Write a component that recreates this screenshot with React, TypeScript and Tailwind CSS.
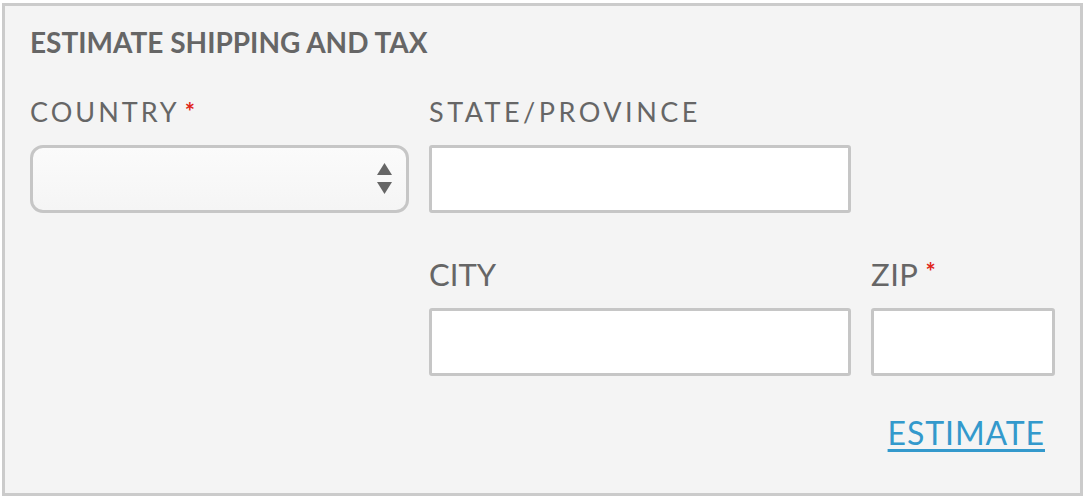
export default function App() {
  const base = "text-[#666] font-['Lato',sans-serif]";
  const star = "inline-block align-top leading-none text-[#e0261b] text-[24px] font-bold tracking-normal relative top-[2px]";
  const input = "h-[68px] bg-white border-[3px] border-[#c6c6c6] rounded-[3px]";
  return (
    <div className="w-[1084px] h-[500px] bg-white pt-[3px] pl-[2px]">
      <div className="w-[1081px] h-[493px] border-[3px] border-[#cbcbcb] bg-[#f4f4f4] px-[25px] pt-[22px]">
        <h2 className={`text-[28px] leading-[28px] font-bold ${base}`}>
          ESTIMATE SHIPPING AND TAX
        </h2>

        <div className="grid grid-cols-[379px_422px_184px] gap-x-[20px] mt-[42px]">
          <div className={`text-[27px] leading-[28px] tracking-[3px] ${base}`}>
            COUNTRY<span className={`${star} ml-[5px]`}>*</span>
          </div>
          <div className={`text-[27px] leading-[28px] tracking-[3.5px] ${base}`}>
            STATE/PROVINCE
          </div>
          <div />

          <div className="relative mt-[19px] h-[68px] rounded-[13px] border-[3px] border-[#c6c6c6] bg-gradient-to-b from-[#fbfbfb] to-[#f5f5f5]">
            <svg
              className="absolute right-[14px] top-[15px]"
              width="15"
              height="31"
              viewBox="0 0 15 31"
            >
              <polygon points="7.5,0 15,12 0,12" fill="#666" />
              <polygon points="0,19 15,19 7.5,31" fill="#666" />
            </svg>
          </div>
          <div className={`${input} mt-[19px]`} />
          <div />

          <div />
          <div className={`text-[31px] leading-[32px] mt-[45px] ${base}`}>CITY</div>
          <div className={`text-[31px] leading-[32px] tracking-[0.5px] mt-[45px] ${base}`}>
            ZIP<span className={`${star} ml-[7px]`}>*</span>
          </div>

          <div />
          <div className={`${input} mt-[18px]`} />
          <div className={`${input} mt-[18px]`} />
        </div>

        <div className="flex justify-end pr-[10px] mt-[41px]">
          <a
            href="#"
            className="text-[32px] leading-[32px] tracking-[0.9px] text-[#3399cc] underline decoration-[3px] underline-offset-[4px] font-['Lato',sans-serif]"
          >
            ESTIMATE
          </a>
        </div>
      </div>
    </div>
  );
}
